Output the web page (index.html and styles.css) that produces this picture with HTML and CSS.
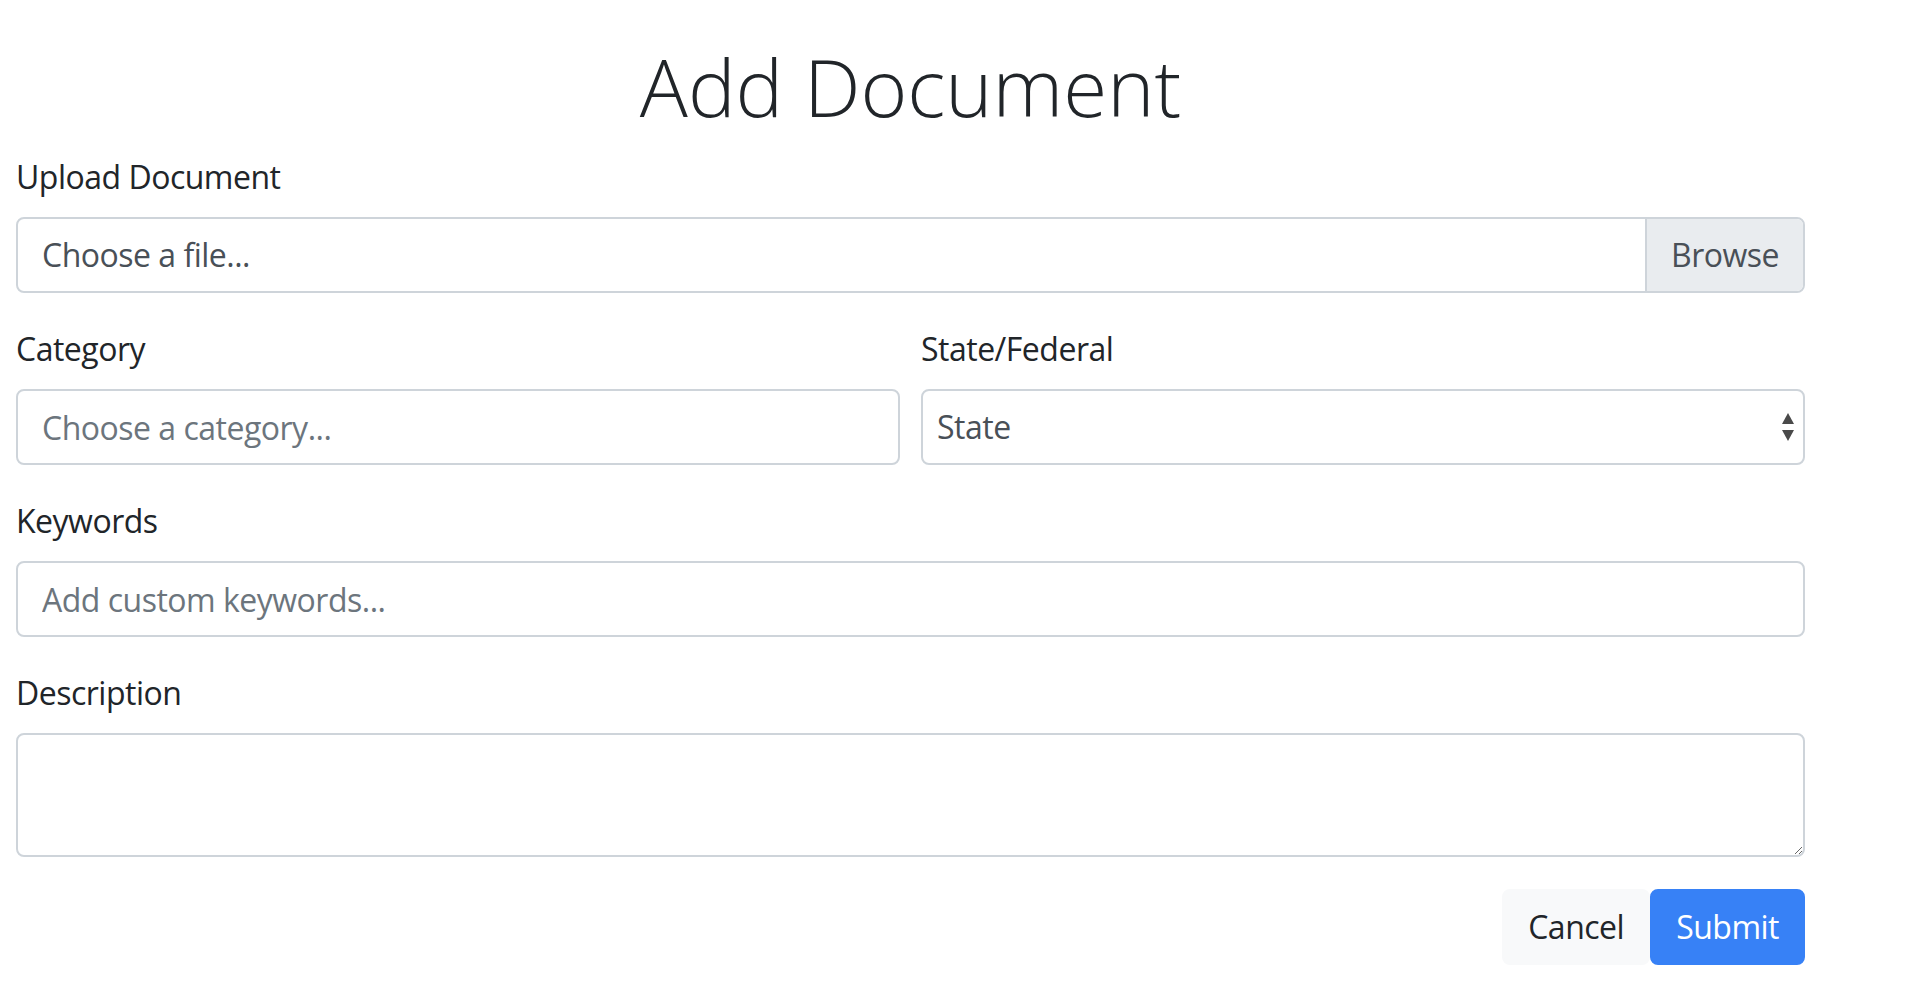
FILE: index.html
```html
<!DOCTYPE html>
<html lang="en">
<head>
<meta charset="utf-8">
<title>Add Document</title>
<link rel="stylesheet" href="styles.css">
</head>
<body>
<main class="page">
  <h1 class="title">Add Document</h1>
  <form class="doc-form">
    <div class="form-group">
      <label class="form-label">Upload Document</label>
      <div class="file-input">
        <span class="file-text">Choose a file...</span>
        <span class="file-browse">Browse</span>
      </div>
    </div>
    <div class="form-row">
      <div class="form-group col">
        <label class="form-label">Category</label>
        <input class="form-control" type="text" placeholder="Choose a category...">
      </div>
      <div class="form-group col">
        <label class="form-label">State/Federal</label>
        <div class="select-wrap">
          <select class="form-control select">
            <option>State</option>
            <option>Federal</option>
          </select>
          <svg class="select-arrows" width="14" height="30" viewBox="0 0 14 30" aria-hidden="true">
            <path d="M7 1 L13 12 L1 12 Z" fill="#4a4a4a"/>
            <path d="M1 18 L13 18 L7 29 Z" fill="#4a4a4a"/>
          </svg>
        </div>
      </div>
    </div>
    <div class="form-group">
      <label class="form-label">Keywords</label>
      <input class="form-control" type="text" placeholder="Add custom keywords...">
    </div>
    <div class="form-group">
      <label class="form-label">Description</label>
      <textarea class="form-control textarea" rows="2"></textarea>
    </div>
    <div class="actions">
      <button type="button" class="btn btn-light">Cancel</button>
      <button type="submit" class="btn btn-primary">Submit</button>
    </div>
  </form>
</main>
</body>
</html>
```

FILE: styles.css
```css
html, body {
  margin: 0;
  padding: 0;
  background: #ffffff;
}

body {
  font-family: "Open Sans", "Noto Sans", "Liberation Sans", sans-serif;
  color: #212529;
  font-size: 32px;
  line-height: 48px;
  letter-spacing: -0.5px;
}

.page {
  width: 1789px;
  margin-left: 16px;
  padding-top: 38px;
}

.title {
  margin: 0 0 19px;
  font-size: 80px;
  line-height: 96px;
  font-weight: 300;
  letter-spacing: 0;
  text-align: center;
  color: #212529;
}

.doc-form {
  display: flex;
  flex-direction: column;
}

.form-group {
  display: flex;
  flex-direction: column;
  margin-bottom: 32px;
}

.form-row {
  display: flex;
  gap: 21px;
}

.col {
  flex: 1 1 0;
  min-width: 0;
}

.form-label {
  display: block;
  margin-bottom: 16px;
  font-size: 32px;
  line-height: 48px;
  color: #212529;
}

.form-control {
  box-sizing: border-box;
  display: block;
  width: 100%;
  height: 76px;
  margin: 0;
  padding: 12px 24px;
  font-family: inherit;
  font-size: 32px;
  line-height: 48px;
  letter-spacing: -0.5px;
  color: #495057;
  background: #ffffff;
  border: 2px solid #ced4da;
  border-radius: 8px;
  outline: none;
}

.form-control::placeholder {
  color: #6c757d;
  opacity: 1;
}

.file-input {
  box-sizing: border-box;
  display: flex;
  height: 76px;
  border: 2px solid #ced4da;
  border-radius: 8px;
  overflow: hidden;
}

.file-text {
  flex: 1;
  padding: 12px 24px;
  color: #495057;
}

.file-browse {
  padding: 12px 24px;
  background: #e9ecef;
  color: #495057;
  border-left: 2px solid #ced4da;
}

.select-wrap {
  position: relative;
}

.select {
  appearance: none;
  -webkit-appearance: none;
  padding-left: 14px;
  color: #495057;
}

.select-arrows {
  position: absolute;
  right: 10px;
  top: 23px;
  pointer-events: none;
}

.textarea {
  height: 124px;
  resize: vertical;
}

.actions {
  display: flex;
  justify-content: flex-end;
}

.btn {
  box-sizing: border-box;
  height: 76px;
  padding: 12px 24px;
  font-family: inherit;
  font-size: 32px;
  line-height: 48px;
  letter-spacing: -0.5px;
  border: 2px solid transparent;
  border-radius: 8px;
  cursor: pointer;
}

.btn-light {
  background: #f8f9fa;
  border-color: #f8f9fa;
  color: #212529;
}

.btn-primary {
  background: #3781f6;
  border-color: #3781f6;
  color: #ffffff;
}
```
